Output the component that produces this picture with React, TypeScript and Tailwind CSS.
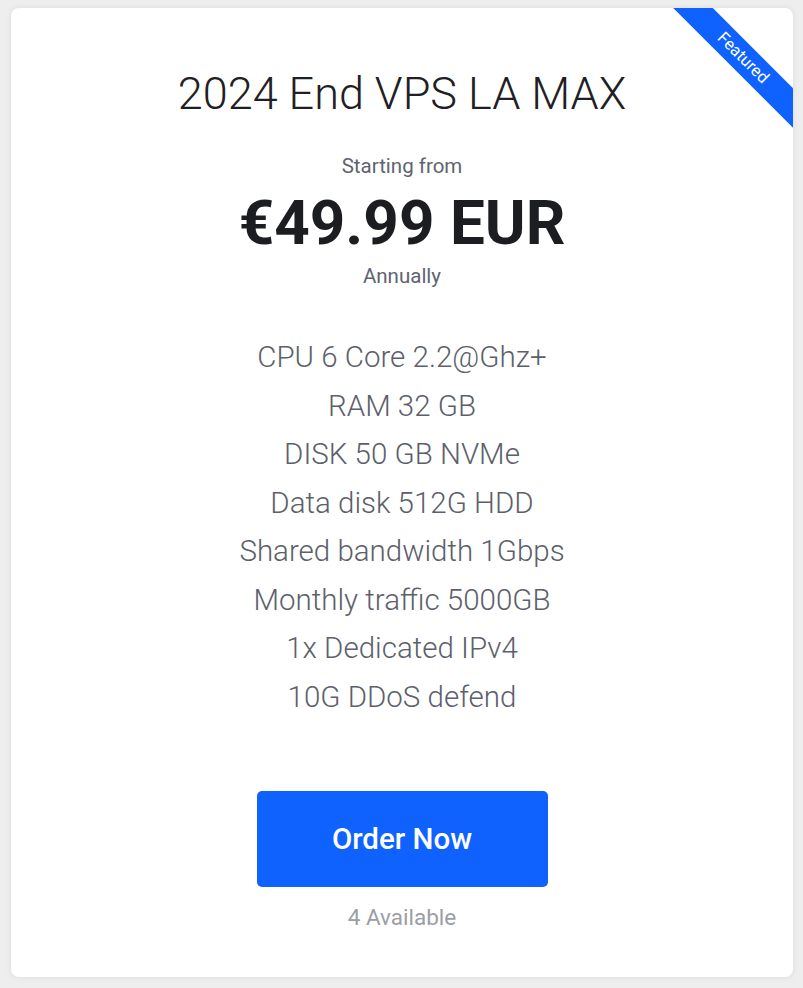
const features = [
  "CPU 6 Core 2.2@Ghz+",
  "RAM 32 GB",
  "DISK 50 GB NVMe",
  "Data disk 512G HDD",
  "Shared bandwidth 1Gbps",
  "Monthly traffic 5000GB",
  "1x Dedicated IPv4",
  "10G DDoS defend",
];

export default function App() {
  return (
    <div
      className="min-h-[988px] w-[803px] bg-[#eeeeee] pt-2 pl-[11px] pr-[10px] pb-[11px]"
      style={{ fontFamily: "Roboto, 'Liberation Sans', sans-serif" }}
    >
      {/* Card */}
      <div className="relative h-[969px] overflow-hidden rounded-lg bg-white shadow-[0_0_6px_rgba(0,0,0,0.08)]">
        {/* Featured ribbon */}
        <div className="absolute right-[-50px] top-[36px] flex h-[28px] w-[200px] rotate-45 items-center justify-center bg-[#0f62fe]">
          <span className="text-[16.5px] leading-none text-white">Featured</span>
        </div>

        <div className="flex flex-col items-center text-center">
          <h2 className="mt-[60px] text-[45px] font-light leading-[52px] text-[#1f2024]">
            2024 End VPS LA MAX
          </h2>

          <p className="mt-[34px] text-[20.5px] leading-[24px] text-[#5f6470]">
            Starting from
          </p>
          <p className="mt-[13px] text-[62px] font-bold leading-[64px] text-[#1c1d21]">
            €49.99 EUR
          </p>
          <p className="mt-[9px] text-[20.5px] leading-[24px] text-[#5f6470]">
            Annually
          </p>

          <ul className="mt-[45px] flex flex-col">
            {features.map((f) => (
              <li
                key={f}
                className="text-[29.5px] font-light leading-[48.5px] text-[#5c606b]"
              >
                {f}
              </li>
            ))}
          </ul>

          <button className="mt-[70px] flex h-[96px] w-[291px] items-center justify-center rounded-[5px] bg-[#0f62fe] text-[29.5px] font-medium text-white">
            Order Now
          </button>
          <p className="mt-[17px] text-[22.5px] leading-[26px] text-[#9b9ea6]">
            4 Available
          </p>
        </div>
      </div>
    </div>
  );
}
